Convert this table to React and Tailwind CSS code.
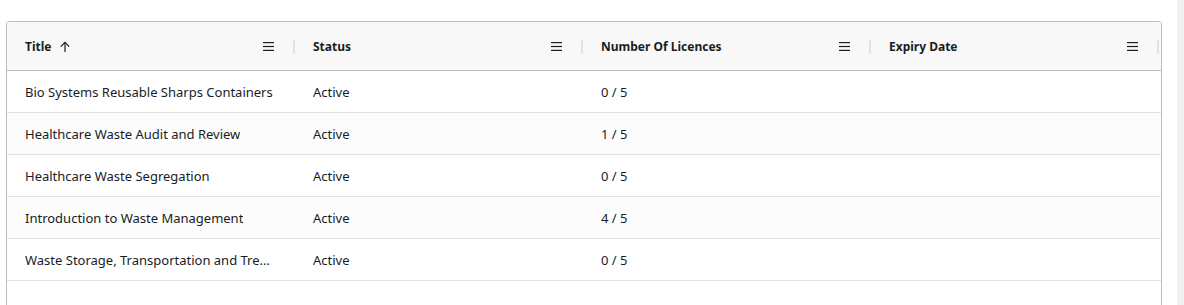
import React from 'react';

const rows = [
  { title: 'Bio Systems Reusable Sharps Containers', status: 'Active', licences: '0 / 5', expiry: '' },
  { title: 'Healthcare Waste Audit and Review', status: 'Active', licences: '1 / 5', expiry: '' },
  { title: 'Healthcare Waste Segregation', status: 'Active', licences: '0 / 5', expiry: '' },
  { title: 'Introduction to Waste Management', status: 'Active', licences: '4 / 5', expiry: '' },
  { title: 'Waste Storage, Transportation and Treatment of Healthcare Waste', status: 'Active', licences: '0 / 5', expiry: '' },
];

const columns = [
  { key: 'title', label: 'Title', sorted: true },
  { key: 'status', label: 'Status' },
  { key: 'licences', label: 'Number Of Licences' },
  { key: 'expiry', label: 'Expiry Date' },
];

const MenuIcon = () => (
  <svg width="11" height="9" viewBox="0 0 11 9" className="text-[#181d1f]">
    <rect x="0" y="0" width="11" height="1.2" fill="currentColor" />
    <rect x="0" y="3.9" width="11" height="1.2" fill="currentColor" />
    <rect x="0" y="7.8" width="11" height="1.2" fill="currentColor" />
  </svg>
);

const SortUp = () => (
  <svg width="12" height="12" viewBox="0 0 12 12" fill="none" stroke="#181d1f" strokeWidth="1.2" className="ml-[8px]">
    <path d="M6 11V1.5" />
    <path d="M1.8 5.6L6 1.4l4.2 4.2" />
  </svg>
);

export default function App() {
  return (
    <div className="flex w-[1184px] h-[305px] overflow-hidden bg-white text-[#181d1f]" style={{ fontFamily: '"Noto Sans", "Open Sans", sans-serif' }}>
      <div className="flex-1 pt-[21px] pl-[6px]">
        <div className="w-[1156px] h-[300px] border border-[#babfc7] rounded-t-[3px] overflow-hidden">
          {/* Header */}
          <div className="flex h-[49px] bg-[#f8f8f8] border-b border-[#babfc7]">
            {columns.map(c => (
              <div key={c.key} className="w-[288px] shrink-0 flex items-center pl-[18px] pt-[1px] relative">
                <span className="text-[12px] font-bold">{c.label}</span>
                {c.sorted && <SortUp />}
                <div className="ml-auto mr-[19px] flex items-center"><MenuIcon /></div>
                <div className="w-[2px] h-[14px] bg-[#dde2eb]" />
              </div>
            ))}
          </div>
          {/* Body */}
          {rows.map((r, i) => (
            <div key={i} className={`flex h-[42px] pt-[3px] border-b border-[#dde2eb] text-[13px] ${i % 2 === 1 ? 'bg-[#fcfcfc]' : 'bg-white'}`}>
              <div className="w-[288px] shrink-0 px-[18px] flex items-center min-w-0">
                <span className="truncate">{r.title}</span>
              </div>
              <div className="w-[288px] shrink-0 px-[18px] flex items-center">{r.status}</div>
              <div className="w-[288px] shrink-0 px-[18px] flex items-center">{r.licences}</div>
              <div className="w-[288px] shrink-0 px-[18px] flex items-center">{r.expiry}</div>
            </div>
          ))}
        </div>
      </div>
      <div className="w-[7px] bg-[#f0f0ee]" />
    </div>
  );
}
